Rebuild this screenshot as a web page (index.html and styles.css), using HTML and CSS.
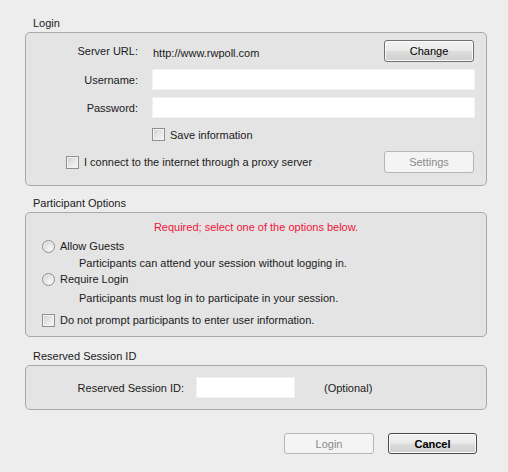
FILE: index.html
```html
<!DOCTYPE html>
<html>
<head>
<meta charset="utf-8">
<link rel="stylesheet" href="styles.css">
</head>
<body>
<div class="dialog">
  <section class="group">
    <div class="group-title">Login</div>
    <div class="box login-box">
      <div class="row row-url">
        <span class="label">Server URL:</span>
        <span class="url">http://www.rwpoll.com</span>
        <button class="btn">Change</button>
      </div>
      <div class="row row-input">
        <span class="label">Username:</span>
        <span class="input wide"></span>
      </div>
      <div class="row row-input">
        <span class="label">Password:</span>
        <span class="input wide"></span>
      </div>
      <div class="row row-save">
        <span class="label"></span>
        <span class="check"></span>
        <span class="check-text">Save information</span>
      </div>
      <div class="row row-proxy">
        <span class="check"></span>
        <span class="check-text grow">I connect to the internet through a proxy server</span>
        <button class="btn disabled">Settings</button>
      </div>
    </div>
  </section>

  <section class="group group-part">
    <div class="group-title">Participant Options</div>
    <div class="box part-box">
      <div class="required">Required; select one of the options below.</div>
      <div class="opt opt-allow"><span class="radio"></span><span class="opt-text">Allow Guests</span></div>
      <div class="desc desc-1">Participants can attend your session without logging in.</div>
      <div class="opt opt-require"><span class="radio"></span><span class="opt-text">Require Login</span></div>
      <div class="desc desc-2">Participants must log in to participate in your session.</div>
      <div class="opt opt-prompt"><span class="check"></span><span class="opt-text">Do not prompt participants to enter user information.</span></div>
    </div>
  </section>

  <section class="group group-res">
    <div class="group-title">Reserved Session ID</div>
    <div class="box res-box">
      <span class="res-label">Reserved Session ID:</span>
      <span class="input res-input"></span>
      <span class="optional">(Optional)</span>
    </div>
  </section>

  <div class="actions">
    <button class="btn disabled small">Login</button>
    <button class="btn default small">Cancel</button>
  </div>
</div>
</body>
</html>
```

FILE: styles.css
```css
html, body {
  margin: 0;
  padding: 0;
}
body {
  background: #ededed;
  font-family: "Liberation Sans", Arial, sans-serif;
  font-size: 11px;
  line-height: 14px;
  color: #1a1a1a;
}
.dialog {
  width: 508px;
  height: 472px;
  padding-top: 16px;
  box-sizing: border-box;
}
.group-title {
  height: 14px;
  margin: 0 0 2px 33px;
}
.group-part { margin-top: 10px; }
.group-res { margin-top: 12px; }
.box {
  margin: 0 21px 0 25px;
  border: 1px solid #a8a8a8;
  border-radius: 5px;
  background: #e4e4e4;
}

/* login box */
.login-box {
  display: flex;
  flex-direction: column;
  gap: 7px;
  padding: 7px 12px 12px 0;
}
.row {
  display: flex;
  align-items: center;
}
.label {
  flex: none;
  width: 112px;
  margin-right: 14px;
  text-align: right;
}
.row-url { height: 22px; }
.row-url .url { flex: 1; padding-left: 1px; padding-top: 3px; }
.row-input { height: 21px; }
.row-save { height: 18px; }
.row-proxy {
  height: 22px;
  margin-top: 1px;
  padding-left: 40px;
}
.grow { flex: 1; }
.input {
  display: block;
  background: #fff;
  height: 21px;
  box-sizing: border-box;
  border: 1px solid #f2f2f2;
}
.wide { flex: 1; margin-right: -1px; }

.check {
  flex: none;
  display: inline-block;
  width: 13px;
  height: 13px;
  box-sizing: border-box;
  border: 1px solid #8e8f8f;
  background: linear-gradient(135deg, #cfcfcf 0%, #e6e6e6 50%, #f6f6f6 100%);
  box-shadow: inset 0 0 0 1px #f3f3f3;
}
.check-text { margin-left: 5px; }
.row-save .check-text { padding-top: 1px; }

.radio {
  flex: none;
  display: inline-block;
  width: 13px;
  height: 13px;
  box-sizing: border-box;
  border: 1px solid #8e8f8f;
  border-radius: 50%;
  background: radial-gradient(circle at 65% 70%, #f8f8f8 0%, #e4e4e4 45%, #c9c9c9 100%);
  box-shadow: inset 0 0 0 1px #f0f0f0;
}

.btn {
  flex: none;
  font-family: inherit;
  font-size: 11px;
  color: #000;
  width: 90px;
  height: 22px;
  padding: 0;
  border: 1px solid #707070;
  border-radius: 3px;
  background: linear-gradient(#f2f2f2 0%, #ebebeb 48%, #dddddd 52%, #cfcfcf 100%);
  box-shadow: inset 0 0 0 1px #fbfbfb;
}
.btn.disabled {
  border-color: #b4b7b9;
  background: #f4f4f4;
  color: #8a8a8a;
  box-shadow: none;
}
.btn.default {
  font-weight: bold;
  border-color: #4a4a4a;
}
.btn.small { height: 21px; }

/* participant options */
.part-box {
  padding: 7px 0 9px 16px;
}
.required {
  color: #f0143c;
  text-align: center;
  margin-left: -16px;
}
.opt {
  display: flex;
  align-items: center;
  height: 14px;
}
.opt-text { margin-left: 5px; }
.opt-allow { margin-top: 5px; }
.desc { padding-left: 37px; }
.desc-1 { margin-top: 3px; }
.opt-require { margin-top: 2px; }
.desc-2 { margin-top: 5px; }
.opt-prompt { margin-top: 8px; }

/* reserved */
.res-box {
  display: flex;
  align-items: center;
  padding: 11px 0;
}
.res-label {
  width: 158px;
  text-align: right;
  margin-right: 12px;
}
.res-input {
  width: 99px;
  height: 21px;
}
.optional { margin-left: 29px; }

.actions {
  display: flex;
  justify-content: flex-end;
  gap: 14px;
  margin-top: 23px;
  padding-right: 31px;
}
.actions .default { width: 89px; }
```
